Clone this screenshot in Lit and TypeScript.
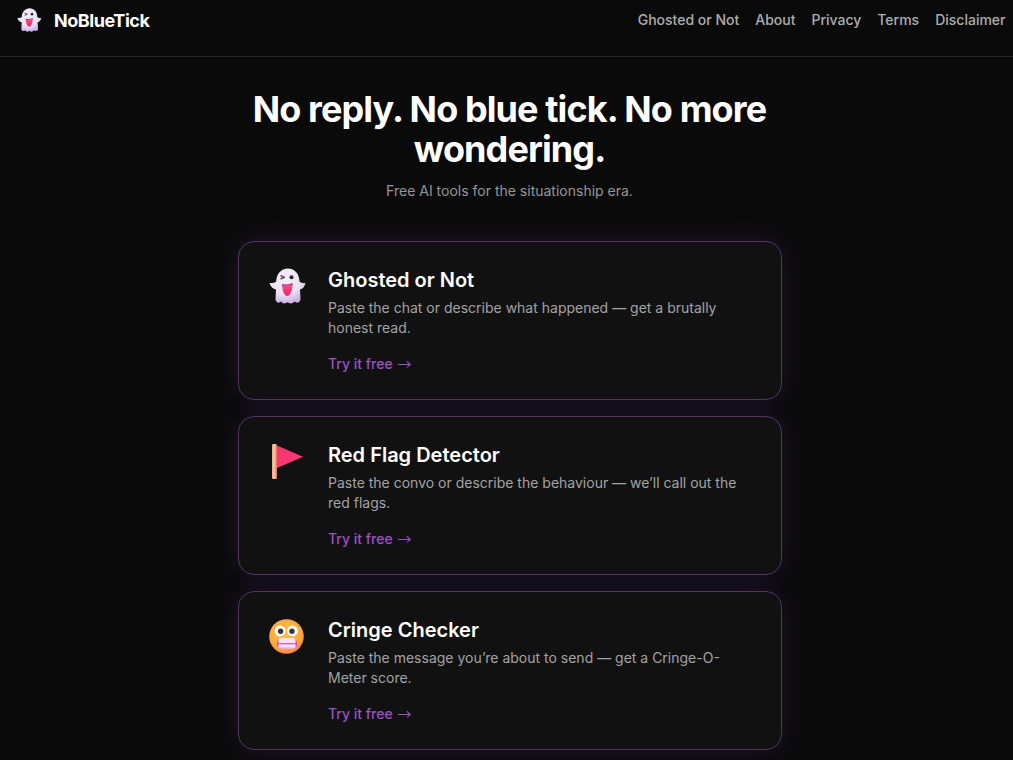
import { LitElement, html, css } from 'lit';
import { customElement } from 'lit/decorators.js';

const ghost = (cls: string) => html`
  <svg class=${cls} viewBox="0 0 48 48">
    <defs>
      <radialGradient id="ghostBody" cx="0.42" cy="0.3" r="0.8">
        <stop offset="0" stop-color="#f6f1f8" />
        <stop offset="0.55" stop-color="#ece2f2" />
        <stop offset="1" stop-color="#bd9de2" />
      </radialGradient>
      <linearGradient id="ghostTongue" x1="0" y1="0" x2="0" y2="1">
        <stop offset="0" stop-color="#ff4f7e" />
        <stop offset="1" stop-color="#f0246e" />
      </linearGradient>
    </defs>
    <path
      fill="url(#ghostBody)"
      d="M25 6.5C18 6.5 13.5 12 13.2 19.5C11.5 21 9 21.3 6.5 21C7.5 24.5 10 27 13 27.5L12.5 37C12.5 40.5 16 41.8 18 39.5C19.5 41.8 22.5 42.2 24.5 40C26.5 42.2 30 41.8 31.5 39.5C33.5 41.8 37.5 40.5 37.5 37L37 27.5C40 27 41.5 24.5 42.5 21C40 21.3 38 21 36.5 19.5C36.3 12 32 6.5 25 6.5Z"
    />
    <path d="M18 13.8L21.5 15.4L18 16.8" fill="none" stroke="#5a4468" stroke-width="1.5" stroke-linecap="round" stroke-linejoin="round" />
    <circle cx="28.5" cy="15.2" r="2" fill="#35263f" />
    <path d="M19 22C22.5 23 26 22.6 29.5 21L29.6 23L19.2 24.2Z" fill="#8a1fa0" />
    <path d="M19.2 23.4C22.4 23.8 26 23.2 29.4 22C29.8 26 28 33.5 24.5 34C21 34.2 19.2 27.5 19.2 23.4Z" fill="url(#ghostTongue)" />
  </svg>
`;

const flag = html`
  <svg class="emoji" viewBox="0 0 48 48">
    <defs>
      <linearGradient id="flagPole" x1="0" y1="0" x2="1" y2="0">
        <stop offset="0" stop-color="#f9a67f" />
        <stop offset="0.45" stop-color="#ffc9a8" />
        <stop offset="1" stop-color="#d9744f" />
      </linearGradient>
      <linearGradient id="flagCloth" x1="0" y1="0" x2="1" y2="1">
        <stop offset="0" stop-color="#f5356f" />
        <stop offset="1" stop-color="#ff3a76" />
      </linearGradient>
    </defs>
    <path d="M14 8.5L40 19.8L14 31Z" fill="url(#flagCloth)" />
    <rect x="9" y="7" width="5" height="35" rx="1.2" fill="url(#flagPole)" />
  </svg>
`;

const grimace = html`
  <svg class="emoji" viewBox="0 0 48 48">
    <defs>
      <radialGradient id="faceFill" cx="0.45" cy="0.38" r="0.72">
        <stop offset="0" stop-color="#ffc24a" />
        <stop offset="0.65" stop-color="#fda83d" />
        <stop offset="1" stop-color="#f26a5c" />
      </radialGradient>
      <linearGradient id="mouthFill" x1="0" y1="0" x2="1" y2="0">
        <stop offset="0" stop-color="#b722a8" />
        <stop offset="0.12" stop-color="#f7e3f5" />
        <stop offset="0.88" stop-color="#f7e3f5" />
        <stop offset="1" stop-color="#b722a8" />
      </linearGradient>
    </defs>
    <circle cx="23.5" cy="24.5" r="17.3" fill="url(#faceFill)" />
    <circle cx="17" cy="19" r="5.4" fill="#fff" />
    <circle cx="29.5" cy="19" r="5.4" fill="#fff" />
    <circle cx="17.6" cy="19.2" r="2.7" fill="#4a2f2c" />
    <circle cx="29" cy="19.2" r="2.7" fill="#4a2f2c" />
    <rect x="14" y="26" width="20" height="11" rx="5" fill="url(#mouthFill)" />
    <rect x="15" y="31" width="18" height="1.3" fill="#d65cc8" />
    <path d="M17 36.2H31" stroke="#e79adf" stroke-width="1.2" stroke-linecap="round" />
  </svg>
`;

const TOOLS = [
  {
    name: 'Ghosted or Not',
    desc: 'Paste the chat or describe what happened — get a brutally honest read.',
    icon: ghost('emoji'),
  },
  {
    name: 'Red Flag Detector',
    desc: 'Paste the convo or describe the behaviour — we’ll call out the red flags.',
    icon: flag,
  },
  {
    name: 'Cringe Checker',
    desc: 'Paste the message you’re about to send — get a Cringe-O-Meter score.',
    icon: grimace,
  },
];

const LINKS = ['Ghosted or Not', 'About', 'Privacy', 'Terms', 'Disclaimer'];

@customElement('app-root')
export class AppRoot extends LitElement {
  static styles = css`
    :host {
      display: block;
      min-height: 760px;
      background: #0a0a0a;
      color: #fff;
      font-family: Inter, 'Noto Sans', sans-serif;
    }

    .nav {
      display: flex;
      align-items: center;
      justify-content: space-between;
      height: 56px;
      padding: 0 7.5px 0 13px;
      border-bottom: 1px solid #262626;
    }

    .brand {
      display: flex;
      align-items: center;
      gap: 9px;
      height: 40px;
      font-size: 18px;
      font-weight: 700;
      letter-spacing: -0.45px;
      margin-top: -16px;
      color: #fff;
    }

    .brand-icon {
      width: 32px;
      height: 32px;
    }

    .links {
      display: flex;
      gap: 16px;
      margin-top: -16px;
      font-size: 14px;
      font-weight: 500;
      line-height: 20px;
      color: #adadad;
    }

    main {
      box-sizing: border-box;
      width: 544px;
      margin-left: 238px;
      padding: 32px 0 10px;
    }

    h1 {
      margin: 0 1px 0 0;
      font-size: 36px;
      line-height: 40px;
      font-weight: 700;
      letter-spacing: -0.9px;
      text-align: center;
    }

    .sub {
      margin: 12px 1px 40px 0;
      font-size: 14px;
      line-height: 20px;
      color: #969696;
      text-align: center;
    }

    .cards {
      display: flex;
      flex-direction: column;
      gap: 16px;
    }

    .card {
      display: flex;
      gap: 17px;
      padding: 24px;
      background: #111111;
      border: 1px solid #4f3560;
      border-radius: 16px;
      box-shadow: 0 0 28px rgba(168, 85, 247, 0.14);
    }

    .emoji {
      flex: none;
      width: 48px;
      height: 48px;
      margin-top: -4px;
    }

    .title {
      font-size: 20px;
      line-height: 28px;
      font-weight: 600;
    }

    .desc {
      margin: 4px 0 0;
      font-size: 14px;
      line-height: 20px;
      color: #a3a3a3;
    }

    .cta {
      margin-top: 16px;
      height: 21px;
      font-size: 14px;
      line-height: 20px;
      font-weight: 500;
      color: #9a52c6;
    }

    .arrow {
      font-family: 'Noto Sans CJK SC', sans-serif;
      font-weight: 400;
      line-height: 0;
      margin-left: 1px;
    }
  `;

  render() {
    return html`
      <nav class="nav">
        <div class="brand">${ghost('brand-icon')}<span>NoBlueTick</span></div>
        <div class="links">${LINKS.map((l) => html`<span>${l}</span>`)}</div>
      </nav>
      <main>
        <h1>No reply. No blue tick. No more wondering.</h1>
        <p class="sub">Free AI tools for the situationship era.</p>
        <div class="cards">
          ${TOOLS.map(
            (t) => html`
              <div class="card">
                ${t.icon}
                <div>
                  <div class="title">${t.name}</div>
                  <p class="desc">${t.desc}</p>
                  <div class="cta">Try it free <span class="arrow">→</span></div>
                </div>
              </div>
            `
          )}
        </div>
      </main>
    `;
  }
}
